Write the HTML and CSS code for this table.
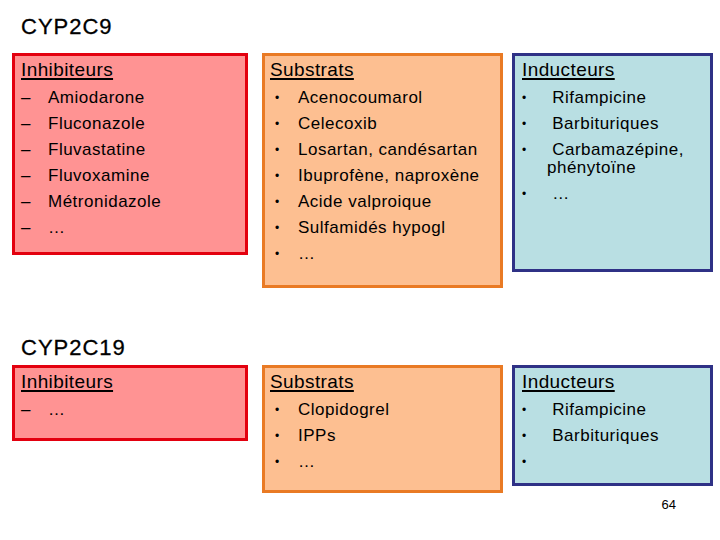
FILE: index.html
```html
<!DOCTYPE html>
<html lang="fr">
<head>
<meta charset="utf-8">
<title>CYP2C9 / CYP2C19</title>
<link rel="stylesheet" href="styles.css">
</head>
<body>
<div class="slide">
  <section class="sec sec-first">
    <h1 class="title">CYP2C9</h1>
    <div class="row">
      <div class="box red h-a">
        <h2 class="head">Inhibiteurs</h2>
        <ul class="list dash">
          <li><span class="mk">–</span>Amiodarone</li>
          <li><span class="mk">–</span>Fluconazole</li>
          <li><span class="mk">–</span>Fluvastatine</li>
          <li><span class="mk">–</span>Fluvoxamine</li>
          <li><span class="mk">–</span>Métronidazole</li>
          <li><span class="mk">–</span>…</li>
        </ul>
      </div>
      <div class="box orange h-b">
        <h2 class="head">Substrats</h2>
        <ul class="list dot">
          <li><span class="mk">•</span>Acenocoumarol</li>
          <li><span class="mk">•</span>Celecoxib</li>
          <li><span class="mk">•</span>Losartan, candésartan</li>
          <li><span class="mk">•</span>Ibuprofène, naproxène</li>
          <li><span class="mk">•</span>Acide valproique</li>
          <li><span class="mk">•</span>Sulfamidés hypogl</li>
          <li><span class="mk">•</span>…</li>
        </ul>
      </div>
      <div class="box blue h-c">
        <h2 class="head">Inducteurs</h2>
        <ul class="list dot ind">
          <li><span class="mk">•</span>&nbsp;Rifampicine</li>
          <li><span class="mk">•</span>&nbsp;Barbituriques</li>
          <li><span class="mk">•</span>&nbsp;Carbamazépine, phénytoïne</li>
          <li><span class="mk">•</span>&nbsp;…</li>
        </ul>
      </div>
    </div>
  </section>

  <section class="sec sec-second">
    <h1 class="title">CYP2C19</h1>
    <div class="row">
      <div class="box red h-d">
        <h2 class="head">Inhibiteurs</h2>
        <ul class="list dash">
          <li><span class="mk">–</span>…</li>
        </ul>
      </div>
      <div class="box orange h-e">
        <h2 class="head">Substrats</h2>
        <ul class="list dot">
          <li><span class="mk">•</span>Clopidogrel</li>
          <li><span class="mk">•</span>IPPs</li>
          <li><span class="mk">•</span>…</li>
        </ul>
      </div>
      <div class="box blue h-f">
        <h2 class="head">Inducteurs</h2>
        <ul class="list dot ind">
          <li><span class="mk">•</span>&nbsp;Rifampicine</li>
          <li><span class="mk">•</span>&nbsp;Barbituriques</li>
          <li><span class="mk">•</span></li>
        </ul>
      </div>
    </div>
  </section>

  <footer class="foot">64</footer>
</div>
</body>
</html>
```
FILE: styles.css
```css
html, body {
  margin: 0;
  padding: 0;
  background: #ffffff;
}

body {
  font-family: "Liberation Sans", Arial, sans-serif;
  color: #000000;
}

.slide {
  width: 720px;
  height: 540px;
  box-sizing: border-box;
  padding: 14px 0 0 12px;
  display: flex;
  flex-direction: column;
}

.title {
  margin: 0 0 0 9px;
  font-size: 22px;
  font-weight: normal;
  letter-spacing: 1px;
  line-height: 26px;
  -webkit-text-stroke: 0.3px #000;
}

.sec-first .title {
  margin-bottom: 13px;
}

.sec-second {
  margin-top: 47px;
}

.sec-second .title {
  margin-bottom: 4px;
}

.row {
  display: grid;
  grid-template-columns: 236px 241px 196px;
  column-gap: 14px;
  align-items: start;
}

.row > .box:nth-child(3) {
  margin-left: -5px;
}

.box {
  box-sizing: border-box;
  border: 3px solid;
  padding: 2px 4px 0 6px;
}

.red {
  background: #ff9393;
  border-color: #e3000f;
}

.orange {
  background: #fdbf91;
  border-color: #e97a24;
  padding-left: 5px;
}

.blue {
  background: #b9dfe3;
  border-color: #2f3186;
  padding-left: 7px;
}

.h-a { height: 202px; }
.h-b { height: 235px; }
.h-c { height: 219px; }
.h-d { height: 76px; }
.h-e { height: 128px; }
.h-f { height: 121px; }

.head {
  margin: 0;
  font-size: 19px;
  font-weight: normal;
  line-height: 24px;
  letter-spacing: 0.4px;
  text-decoration: underline;
  text-decoration-thickness: 1.5px;
  text-underline-offset: 2px;
}

.list {
  list-style: none;
  margin: 7px 0 0 0;
  padding: 0;
  display: flex;
  flex-direction: column;
  row-gap: 8px;
  font-size: 17px;
  line-height: 18px;
  letter-spacing: 0.5px;
}

.list li {
  padding-left: 27px;
  text-indent: -27px;
}

.list .mk {
  display: inline-block;
  width: 27px;
  text-indent: 0;
  letter-spacing: 0;
}

.dot {
  padding-left: 5px;
}

.dot li {
  padding-left: 23px;
  text-indent: -23px;
}

.dot .mk {
  width: 23px;
  font-size: 12px;
  line-height: 1px;
  vertical-align: 1px;
}

.ind {
  padding-left: 0;
}

.ind li {
  padding-left: 25px;
  text-indent: -25px;
}

.ind .mk {
  width: 25px;
}

.foot {
  margin: 4px 44px 0 0;
  align-self: flex-end;
  font-size: 13px;
  line-height: 16px;
}
```
